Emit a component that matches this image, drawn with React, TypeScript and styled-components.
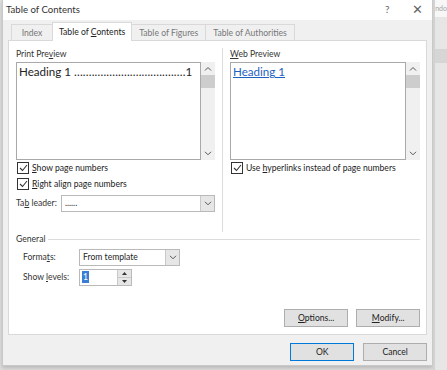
import React, { ReactElement } from 'react';
import styled, { createGlobalStyle } from 'styled-components';

const GlobalStyle = createGlobalStyle`
  html, body {
    margin: 0;
    padding: 0;
    background: #dedede;
  }
  body {
    font-family: Lato, 'Noto Sans', sans-serif;
    font-size: 8.6px;
    color: #1e1e1e;
  }
`;

const Page = styled.div`
  display: flex;
  width: 447px;
  height: 370px;
  overflow: hidden;
`;

const Dialog = styled.div`
  margin-left: 2px;
  width: 433px;
  height: 366px;
  background: #f0f0f0;
  border: 1px solid #c9c9c9;
  border-top: none;
  box-sizing: border-box;
  box-shadow: 0 2px 4px rgba(0, 0, 0, 0.18);
  display: flex;
  flex-direction: column;
`;

const TitleBar = styled.div`
  height: 18px;
  background: #fff;
  display: flex;
  align-items: center;
  padding: 0 0 2px 3px;
  font-size: 9.6px;
  color: #333;
`;

const Title = styled.span`
  flex: 1;
`;

const TitleIcon = styled.span<{ $size: number }>`
  width: 30px;
  text-align: center;
  color: #666;
  font-size: ${(p) => p.$size}px;
`;

const TabStrip = styled.div`
  display: flex;
  align-items: flex-end;
  height: 20px;
  padding-left: 9px;
`;

const Tab = styled.div<{ $active?: boolean }>`
  min-width: 42px;
  box-sizing: border-box;
  height: ${(p) => (p.$active ? 19 : 16)}px;
  padding: 0 ${(p) => (p.$active ? 6 : 7)}px;
  display: flex;
  align-items: center;
  justify-content: center;
  background: ${(p) => (p.$active ? '#fff' : '#f0f0f0')};
  border: 1px solid #d9d9d9;
  border-bottom: none;
  margin-left: -1px;
  color: ${(p) => (p.$active ? '#222' : '#777')};
  position: relative;
  z-index: ${(p) => (p.$active ? 2 : 1)};
  margin-bottom: ${(p) => (p.$active ? -1 : 0)}px;
  white-space: nowrap;
`;

const Panel = styled.div`
  margin: 0 5px;
  height: 295px;
  background: #fff;
  border: 1px solid #d9d9d9;
  box-sizing: border-box;
  padding: 7px 6px 0 7px;
  display: flex;
  flex-direction: column;
`;

const Columns = styled.div`
  display: grid;
  grid-template-columns: 199px 1fr;
  column-gap: 7px;
  height: 184px;
`;

const Column = styled.div<{ $divided?: boolean }>`
  display: flex;
  flex-direction: column;
  ${(p) => (p.$divided ? 'border-left: 1px solid #dcdcdc; padding-left: 7px;' : '')}
`;

const Label = styled.div`
  height: 13px;
  line-height: 13px;
  margin-bottom: 1px;
  color: #333;
`;

const PreviewRow = styled.div`
  display: flex;
  height: 98px;
`;

const PreviewBox = styled.div`
  flex: 1;
  min-width: 0;
  border: 1px solid #a9a9a9;
  padding: 1px 5px 1px 2px;
  font-family: Lato, 'Open Sans', sans-serif;
  font-size: 11.6px;
  line-height: 16px;
  color: #222;
  white-space: nowrap;
  overflow: hidden;
`;

const Leader = styled.div`
  display: flex;
`;

const Dots = styled.span`
  margin-left: 3px;
  letter-spacing: 0.2px;
`;

const LinkText = styled.span`
  color: #1f5fbf;
  text-decoration: underline;
`;

const ScrollBar = styled.div`
  width: 14px;
  background: #f0f0f0;
  display: flex;
  flex-direction: column;
  align-items: center;
`;

const ScrollArrow = styled.div`
  height: 13px;
  display: flex;
  align-items: center;
  justify-content: center;
`;

const ScrollThumb = styled.div`
  width: 14px;
  height: 13px;
  background: #cdcdcd;
`;

const ScrollTrack = styled.div`
  flex: 1;
`;

const CheckRow = styled.label`
  display: flex;
  align-items: center;
  gap: 3px;
  height: 16px;
  margin-left: 1px;
  color: #222;
  white-space: nowrap;
`;

const Box = styled.span`
  width: 10px;
  height: 10px;
  border: 1px solid #333;
  display: flex;
  align-items: center;
  justify-content: center;
  background: #fff;
`;

const FieldRow = styled.div<{ $indent?: number; $labelWidth: number }>`
  display: flex;
  align-items: center;
  height: ${(p) => (p.$indent ? 20 : 22)}px;
  padding-left: ${(p) => p.$indent || 0}px;
  white-space: nowrap;
  & > span:first-child {
    width: ${(p) => p.$labelWidth}px;
    color: #333;
  }
`;

const Select = styled.div<{ $width: number }>`
  width: ${(p) => p.$width}px;
  height: 17px;
  box-sizing: border-box;
  border: 1px solid #b9b9b9;
  display: flex;
  background: #fff;
  & > span:first-child {
    flex: 1;
    padding-left: 3px;
    line-height: 15px;
  }
`;

const DropButton = styled.div`
  width: 13px;
  border-left: 1px solid #c9c9c9;
  background: #e6e6e6;
  display: flex;
  align-items: center;
  justify-content: center;
`;

const Spinner = styled.div`
  width: 53px;
  height: 17px;
  box-sizing: border-box;
  border: 1px solid #b9b9b9;
  display: flex;
  background: #fff;
`;

const SpinValue = styled.div`
  flex: 1;
  padding-left: 2px;
  display: flex;
  align-items: center;
`;

const Selected = styled.span`
  background: #3a7dd6;
  color: #fff;
  line-height: 12px;
  padding: 0 1px;
`;

const SpinButtons = styled.div`
  width: 13px;
  border-left: 1px solid #c9c9c9;
  display: flex;
  flex-direction: column;
  & > div {
    flex: 1;
    background: #e6e6e6;
    display: flex;
    align-items: center;
    justify-content: center;
  }
  & > div + div {
    border-top: 1px solid #c9c9c9;
  }
`;

const GroupHeader = styled.div`
  display: flex;
  align-items: center;
  gap: 3px;
  height: 14px;
  color: #333;
  &::after {
    content: '';
    flex: 1;
    height: 1px;
    background: #dcdcdc;
  }
`;

const GroupBody = styled.div`
  padding-top: 1px;
`;

const ButtonRow = styled.div<{ $gap: number }>`
  display: flex;
  justify-content: flex-end;
  gap: ${(p) => p.$gap}px;
`;

const Button = styled.div<{ $default?: boolean }>`
  width: 64px;
  height: 18px;
  box-sizing: border-box;
  display: flex;
  align-items: center;
  justify-content: center;
  background: #e1e1e1;
  border: 1px solid ${(p) => (p.$default ? '#0078d7' : '#adadad')};
  color: #222;
`;

const Footer = styled.div`
  padding: 8px 5px 0 0;
`;

const ButtonsSpacer = styled.div`
  flex: 1;
`;

const Backdrop = styled.div`
  flex: 1;
  background: #e6e6e6;
  border-left: 2px solid #d2d2d2;
  display: flex;
  flex-direction: column;
`;

const BackdropTitle = styled.div`
  height: 17px;
  background: #f7f7f7;
  color: #a5a5a5;
  font-size: 7px;
  line-height: 17px;
  white-space: nowrap;
  overflow: hidden;
`;

const BackdropBlock = styled.div`
  margin-top: 32px;
  height: 14px;
  background: #d6d6d6;
`;

function Chevron({ up }: { up?: boolean }): ReactElement {
  return (
    <svg width="8" height="5" viewBox="0 0 8 5">
      <path d={up ? 'M1 4.5 L4 1.5 L7 4.5' : 'M1 0.8 L4 3.8 L7 0.8'} fill="none" stroke="#555" strokeWidth="1" />
    </svg>
  );
}

function Triangle({ up }: { up?: boolean }): ReactElement {
  return (
    <svg width="5" height="3" viewBox="0 0 5 3">
      <path d={up ? 'M0 3 L2.5 0 L5 3 Z' : 'M0 0 L2.5 3 L5 0 Z'} fill="#333" />
    </svg>
  );
}

function Check({ label }: { label: React.ReactNode }): ReactElement {
  return (
    <CheckRow>
      <Box>
        <svg width="9" height="8" viewBox="0 0 9 8">
          <path d="M1 4 L3.5 6.5 L8 1" fill="none" stroke="#333" strokeWidth="1.1" />
        </svg>
      </Box>
      <span>{label}</span>
    </CheckRow>
  );
}

function Scroll(): ReactElement {
  return (
    <ScrollBar>
      <ScrollArrow>
        <Chevron up />
      </ScrollArrow>
      <ScrollThumb />
      <ScrollTrack />
      <ScrollArrow>
        <Chevron />
      </ScrollArrow>
    </ScrollBar>
  );
}

function App(): ReactElement {
  return (
    <Page>
      <GlobalStyle />
      <Dialog>
        <TitleBar>
          <Title>Table of Contents</Title>
          <TitleIcon $size={10}>?</TitleIcon>
          <TitleIcon $size={13}>✕</TitleIcon>
        </TitleBar>
        <TabStrip>
          <Tab>Index</Tab>
          <Tab $active>
            <span>
              Table of <u>C</u>ontents
            </span>
          </Tab>
          <Tab>Table of Figures</Tab>
          <Tab>Table of Authorities</Tab>
        </TabStrip>
        <Panel>
          <Columns>
            <Column>
              <Label>
                Print Pre<u>v</u>iew
              </Label>
              <PreviewRow>
                <PreviewBox>
                  <Leader>
                    <span>Heading 1</span>
                    <Dots>{'.'.repeat(38)}</Dots>
                    <span>1</span>
                  </Leader>
                </PreviewBox>
                <Scroll />
              </PreviewRow>
              <Check
                label={
                  <>
                    <u>S</u>how page numbers
                  </>
                }
              />
              <Check
                label={
                  <>
                    <u>R</u>ight align page numbers
                  </>
                }
              />
              <FieldRow $labelWidth={45}>
                <span>
                  Ta<u>b</u> leader:
                </span>
                <Select $width={154}>
                  <span>......</span>
                  <DropButton>
                    <Chevron />
                  </DropButton>
                </Select>
              </FieldRow>
            </Column>
            <Column $divided>
              <Label>
                <u>W</u>eb Preview
              </Label>
              <PreviewRow>
                <PreviewBox>
                  <LinkText>Heading 1</LinkText>
                </PreviewBox>
                <Scroll />
              </PreviewRow>
              <Check
                label={
                  <>
                    Use <u>h</u>yperlinks instead of page numbers
                  </>
                }
              />
            </Column>
          </Columns>
          <GroupHeader>General</GroupHeader>
          <GroupBody>
            <FieldRow $indent={7} $labelWidth={56}>
              <span>
                Forma<u>t</u>s:
              </span>
              <Select $width={101}>
                <span>From template</span>
                <DropButton>
                  <Chevron />
                </DropButton>
              </Select>
            </FieldRow>
            <FieldRow $indent={7} $labelWidth={56}>
              <span>
                Show <u>l</u>evels:
              </span>
              <Spinner>
                <SpinValue>
                  <Selected>1</Selected>
                </SpinValue>
                <SpinButtons>
                  <div>
                    <Triangle up />
                  </div>
                  <div>
                    <Triangle />
                  </div>
                </SpinButtons>
              </Spinner>
            </FieldRow>
          </GroupBody>
          <ButtonsSpacer />
          <ButtonRow $gap={8} style={{ marginBottom: 7 }}>
            <Button>
              <span>
                <u>O</u>ptions...
              </span>
            </Button>
            <Button>
              <span>
                <u>M</u>odify...
              </span>
            </Button>
          </ButtonRow>
        </Panel>
        <Footer>
          <ButtonRow $gap={9}>
            <Button $default>OK</Button>
            <Button>Cancel</Button>
          </ButtonRow>
        </Footer>
      </Dialog>
      <Backdrop>
        <BackdropTitle>ndo</BackdropTitle>
        <BackdropBlock />
      </Backdrop>
    </Page>
  );
}

export default App;
